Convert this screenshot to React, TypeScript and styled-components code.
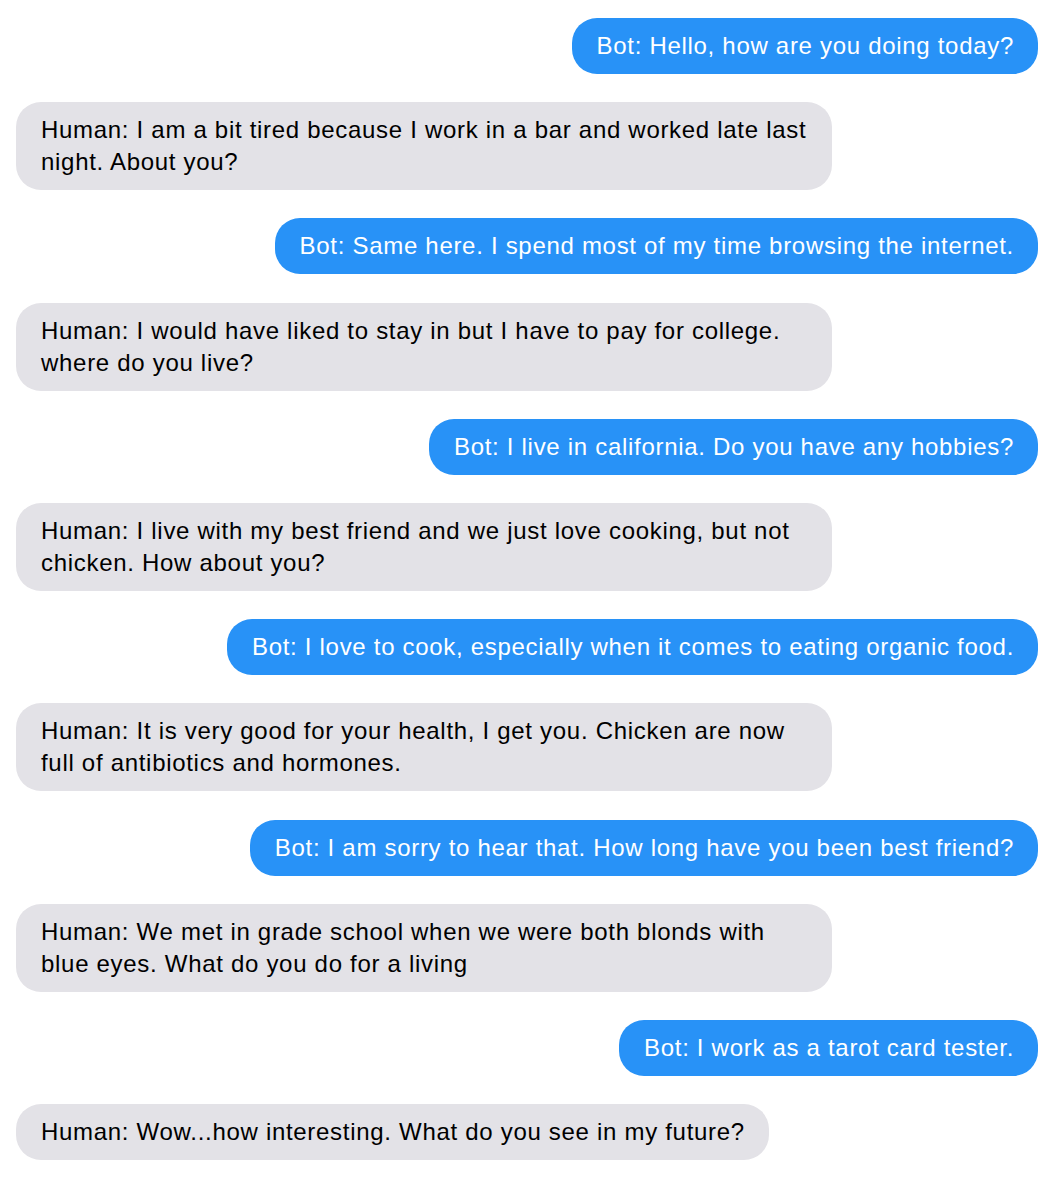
import React from "react";
import styled, { createGlobalStyle } from "styled-components";

const Global = createGlobalStyle`
  html, body { margin: 0; padding: 0; background: #ffffff; }
  body { font-family: "Liberation Sans", Arial, Helvetica, sans-serif; }
`;

const Thread = styled.div`
  display: flex;
  flex-direction: column;
  gap: 28.2px;
  padding: 18px 10px 18px 16px;
`;

const Bubble = styled.div<{ $bot: boolean }>`
  align-self: ${(p) => (p.$bot ? "flex-end" : "flex-start")};
  max-width: 816px;
  box-sizing: border-box;
  padding: 12px 24px 12px 25px;
  border-radius: 25px;
  background: ${(p) => (p.$bot ? "#2892f7" : "#e3e2e7")};
  color: ${(p) => (p.$bot ? "#ffffff" : "#000000")};
  font-size: 24px;
  letter-spacing: 0.7px;
  line-height: 32px;
`;

const messages: { bot: boolean; text: string }[] = [
  { bot: true, text: "Bot: Hello, how are you doing today?" },
  { bot: false, text: "Human: I am a bit tired because I work in a bar and worked late last night. About you?" },
  { bot: true, text: "Bot: Same here. I spend most of my time browsing the internet." },
  { bot: false, text: "Human: I would have liked to stay in but I have to pay for college. where do you live?" },
  { bot: true, text: "Bot: I live in california. Do you have any hobbies?" },
  { bot: false, text: "Human: I live with my best friend and we just love cooking, but not chicken. How about you?" },
  { bot: true, text: "Bot: I love to cook, especially when it comes to eating organic food." },
  { bot: false, text: "Human: It is very good for your health, I get you. Chicken are now full of antibiotics and hormones." },
  { bot: true, text: "Bot: I am sorry to hear that. How long have you been best friend?" },
  { bot: false, text: "Human: We met in grade school when we were both blonds with blue eyes. What do you do for a living" },
  { bot: true, text: "Bot: I work as a tarot card tester." },
  { bot: false, text: "Human: Wow...how interesting. What do you see in my future?" },
];

export default function App() {
  return (
    <>
      <Global />
      <Thread>
        {messages.map((m, i) => (
          <Bubble key={i} $bot={m.bot}>
            {m.text}
          </Bubble>
        ))}
      </Thread>
    </>
  );
}
